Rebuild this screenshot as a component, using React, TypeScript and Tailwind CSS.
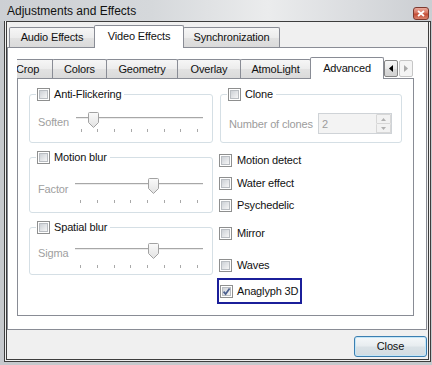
import React from "react";

function CheckBox({ checked = false }: { checked?: boolean }) {
  return (
    <span className="relative inline-flex w-[13px] h-[13px] shrink-0 border border-[#8e8f8f] bg-white p-[1px]">
      <span className="block w-full h-full border border-[#b9bdc2] bg-[linear-gradient(135deg,#cdd1d6_0%,#e3e5e8_55%,#f6f6f6_100%)]" />
      {checked && (
        <svg className="absolute left-[1px] top-[1px]" width="9" height="9" viewBox="0 0 9 9">
          <path d="M1.6 4.6 L3.6 7 L7.6 1.4" fill="none" stroke="#4b5f8e" strokeWidth="1.7" />
        </svg>
      )}
    </span>
  );
}

function Slider({ frac, late }: { frac: number; late?: boolean }) {
  const ticks = [0, 1, 2, 3, 4, 5, 6, 7];
  return (
    <div className="relative flex-1 h-[24px]">
      <div className="absolute left-0 right-0 top-[5px] h-[2px] border-t border-[#a7a7a7] bg-[#ececec]" />
      <div
        className={
          late
            ? "absolute left-[5px] right-[5px] top-[22px] h-[3px] flex justify-between"
            : "absolute left-[5px] right-[5px] top-[17px] h-[3px] flex justify-between"
        }
      >
        {ticks.map((t) => (
          <span key={t} className="block w-px h-full bg-[#a9a9a9]" />
        ))}
      </div>
      <svg
        className="absolute top-0"
        style={{ left: `calc(${frac * 100}% - ${frac * 11}px)` }}
        width="11"
        height="16"
        viewBox="0 0 11 16"
      >
        <defs>
          <linearGradient id="thumbg" x1="0" y1="0" x2="0" y2="1">
            <stop offset="0" stopColor="#fafafa" />
            <stop offset="1" stopColor="#e2e2e2" />
          </linearGradient>
        </defs>
        <path
          d="M1.5 0.5 H9.5 Q10.5 0.5 10.5 1.5 V10.5 L5.5 15.5 L0.5 10.5 V1.5 Q0.5 0.5 1.5 0.5 Z"
          fill="url(#thumbg)"
          stroke="#a2a2a2"
        />
      </svg>
    </div>
  );
}

function Legend({ label }: { label: string }) {
  return (
    <legend className="ml-[6px] pl-[1px] pr-[3px]">
      <span className="flex items-center gap-[4px] h-[13px]">
        <CheckBox />
        <span className="leading-[13px]">{label}</span>
      </span>
    </legend>
  );
}

function Row({ label, cls }: { label: string; cls: string }) {
  return (
    <div className={cls}>
      <CheckBox />
      <span className="leading-[13px]">{label}</span>
    </div>
  );
}

const tabBg = "bg-[linear-gradient(180deg,#f6f6f6_0%,#ececec_50%,#e2e2e2_51%,#dadada_100%)]";

export default function App() {
  return (
    <div className="w-[432px] h-[365px] flex flex-col bg-[#c6c9cd] font-['Liberation_Sans',Arial,sans-serif] text-[11px] leading-[13px] tracking-[-0.15px] text-[#111] overflow-hidden">
      {/* title bar */}
      <div className="h-[21px] shrink-0 flex items-start justify-between bg-[linear-gradient(90deg,#cdd0d4_0%,#d5d8db_35%,#ebeced_62%,#dadcdf_82%,#cbced2_100%)]">
        <span className="pl-[7px] pt-[4px] text-[12px] leading-[14px] tracking-normal text-[#111]">Adjustments and Effects</span>
        <div className="mt-[7px] mr-[3px] w-[16px] h-[13px] rounded-[3px] border border-[#7d3a30] bg-[linear-gradient(180deg,#eaaa9d_0%,#d5735f_45%,#c24a33_55%,#d9826c_100%)] flex items-center justify-center">
          <svg width="8" height="7" viewBox="0 0 8 7">
            <path d="M1 1 L7 6 M7 1 L1 6" stroke="#fff" strokeWidth="1.8" />
          </svg>
        </div>
      </div>

      {/* client area */}
      <div className="flex-1 ml-[4px] mr-[1px] mb-[3px] border-t border-x-[3px] border-b-[3px] border-double border-[#3d3d3d] bg-[#f0f0f0] flex flex-col">
        {/* outer tabs */}
        <div className="h-[25px] shrink-0 flex items-end pl-[2px]">
          <div className={`w-[86px] h-[20px] border border-b-0 border-[#898c95] rounded-t-[2px] ${tabBg} flex items-center justify-center`}>
            Audio Effects
          </div>
          <div className="relative z-10 -ml-px w-[90px] h-[23px] -mb-px border border-b-0 border-[#898c95] rounded-t-[2px] bg-white flex items-center justify-center pb-[1px]">
            Video Effects
          </div>
          <div className={`-ml-px w-[97px] h-[20px] border border-b-0 border-[#898c95] rounded-t-[2px] ${tabBg} flex items-center justify-center`}>
            Synchronization
          </div>
        </div>

        {/* outer pane */}
        <div className="mr-[1px] h-[283px] shrink-0 border border-[#898c95] bg-white pt-[9px] pl-[9px] pr-[12px] pb-[13px] flex flex-col">
          {/* inner tabs */}
          <div className="h-[21px] shrink-0 flex items-end">
            <div className={`w-[36px] h-[19px] overflow-hidden border-t border-r border-[#898c95] ${tabBg}`}>
              <div className="w-[49px] -ml-[14px] h-full flex items-center justify-center">Crop</div>
            </div>
            <div className={`-ml-px w-[55px] h-[19px] border border-b-0 border-[#898c95] rounded-t-[2px] ${tabBg} flex items-center justify-center`}>
              Colors
            </div>
            <div className={`-ml-px w-[72px] h-[19px] border border-b-0 border-[#898c95] rounded-t-[2px] ${tabBg} flex items-center justify-center`}>
              Geometry
            </div>
            <div className={`-ml-px w-[64px] h-[19px] border border-b-0 border-[#898c95] rounded-t-[2px] ${tabBg} flex items-center justify-center`}>
              Overlay
            </div>
            <div className={`-ml-px w-[71px] h-[19px] border border-b-0 border-[#898c95] rounded-t-[2px] ${tabBg} flex items-center justify-center`}>
              AtmoLight
            </div>
            <div className="relative z-10 -ml-px w-[74px] h-[22px] -mb-px border border-b-0 border-[#898c95] rounded-t-[2px] bg-white flex items-center justify-center pb-[1px]">
              Advanced
            </div>
            <div className="self-start mt-[3px] flex gap-[1px]">
              <div className="w-[14px] h-[17px] rounded-[2px] border border-[#858585] bg-[linear-gradient(180deg,#f7f7f7_0%,#e9e9e9_50%,#dcdcdc_51%,#d2d2d2_100%)] flex items-center justify-center">
                <svg width="4" height="7" viewBox="0 0 4 7">
                  <path d="M4 0 L0 3.5 L4 7 Z" fill="#000" />
                </svg>
              </div>
              <div className="w-[14px] h-[17px] rounded-[2px] border border-[#c6c6c6] bg-[#f4f4f4] flex items-center justify-center">
                <svg width="4" height="7" viewBox="0 0 4 7">
                  <path d="M0 0 L4 3.5 L0 7 Z" fill="#a9a9a9" />
                </svg>
              </div>
            </div>
          </div>

          {/* inner pane */}
          <div className="flex-1 border border-[#898c95] bg-white pt-[9px] pl-[11px] flex items-start gap-[6px]">
            {/* left column */}
            <div className="w-[184px] flex flex-col gap-[8px]">
              <fieldset className="border border-[#d5dfe5] rounded-[3px]">
                <Legend label="Anti-Flickering" />
                <div className="pt-[11px] pb-[6px] pl-[8px] pr-[9px] flex items-start gap-[7px]">
                  <span className="mt-[4px] text-[#a0a0a0]">Soften</span>
                  <Slider frac={0.1} />
                </div>
              </fieldset>
              <fieldset className="border border-[#d5dfe5] rounded-[3px]">
                <Legend label="Motion blur" />
                <div className="pt-[14px] pb-[10px] pl-[8px] pr-[9px] flex items-start gap-[7px]">
                  <span className="mt-[5px] text-[#a0a0a0]">Factor</span>
                  <Slider frac={0.62} late />
                </div>
              </fieldset>
              <fieldset className="border border-[#d5dfe5] rounded-[3px]">
                <Legend label="Spatial blur" />
                <div className="pt-[9px] pb-[7px] pl-[8px] pr-[9px] flex items-start gap-[7px]">
                  <span className="mt-[4px] text-[#a0a0a0]">Sigma</span>
                  <Slider frac={0.62} late />
                </div>
              </fieldset>
            </div>

            {/* right column */}
            <div className="w-[183px] flex flex-col">
              <fieldset className="ml-[1px] border border-[#d5dfe5] rounded-[3px]">
                <Legend label="Clone" />
                <div className="pt-[12px] pb-[8px] pl-[8px] pr-[9px] flex items-start justify-between">
                  <span className="mt-[5px] text-[#9c9c9c]">Number of clones</span>
                  <div className="w-[74px] h-[21px] border border-[#cfd3d7] bg-[#f3f3f3] flex items-start justify-between">
                    <span className="pl-[3px] pt-[4px] text-[#9c9c9c]">2</span>
                    <div className="flex flex-col w-[15px]">
                      <div className="h-[10px] border border-[#d7d7d7] rounded-[1px] bg-[#f2f2f2] flex items-center justify-center">
                        <svg width="5" height="3" viewBox="0 0 5 3">
                          <path d="M0 3 L2.5 0 L5 3 Z" fill="#b0b0b0" />
                        </svg>
                      </div>
                      <div className="h-[9px] border border-t-0 border-[#d7d7d7] rounded-[1px] bg-[#f2f2f2] flex items-center justify-center">
                        <svg width="5" height="3" viewBox="0 0 5 3">
                          <path d="M0 0 L2.5 3 L5 0 Z" fill="#b0b0b0" />
                        </svg>
                      </div>
                    </div>
                  </div>
                </div>
              </fieldset>
              <Row label="Motion detect" cls="mt-[11px] h-[13px] flex items-center gap-[5px]" />
              <Row label="Water effect" cls="mt-[10px] h-[13px] flex items-center gap-[5px]" />
              <Row label="Psychedelic" cls="mt-[9px] h-[13px] flex items-center gap-[5px]" />
              <Row label="Mirror" cls="mt-[15px] h-[13px] flex items-center gap-[5px]" />
              <Row label="Waves" cls="mt-[19px] h-[13px] flex items-center gap-[5px]" />
              <div className="mt-[6px] -ml-[2px] w-[85px] h-[26px] border-2 border-[#1b1f9a] flex items-center pl-px gap-[4px]">
                <CheckBox checked />
                <span className="leading-[13px]">Anaglyph 3D</span>
              </div>
            </div>
          </div>
        </div>

        {/* bottom button row */}
        <div className="flex-1 flex items-start justify-end pt-[6px] pr-[1px]">
          <div className="w-[73px] h-[21px] rounded-[3px] border border-[#3c7fb1] bg-[linear-gradient(180deg,#f5f8fa_0%,#e8edf0_45%,#d9e1e6_55%,#d2dce2_100%)] shadow-[inset_0_0_0_1px_#c4e6f7] flex items-center justify-center">
            Close
          </div>
        </div>
      </div>
    </div>
  );
}
